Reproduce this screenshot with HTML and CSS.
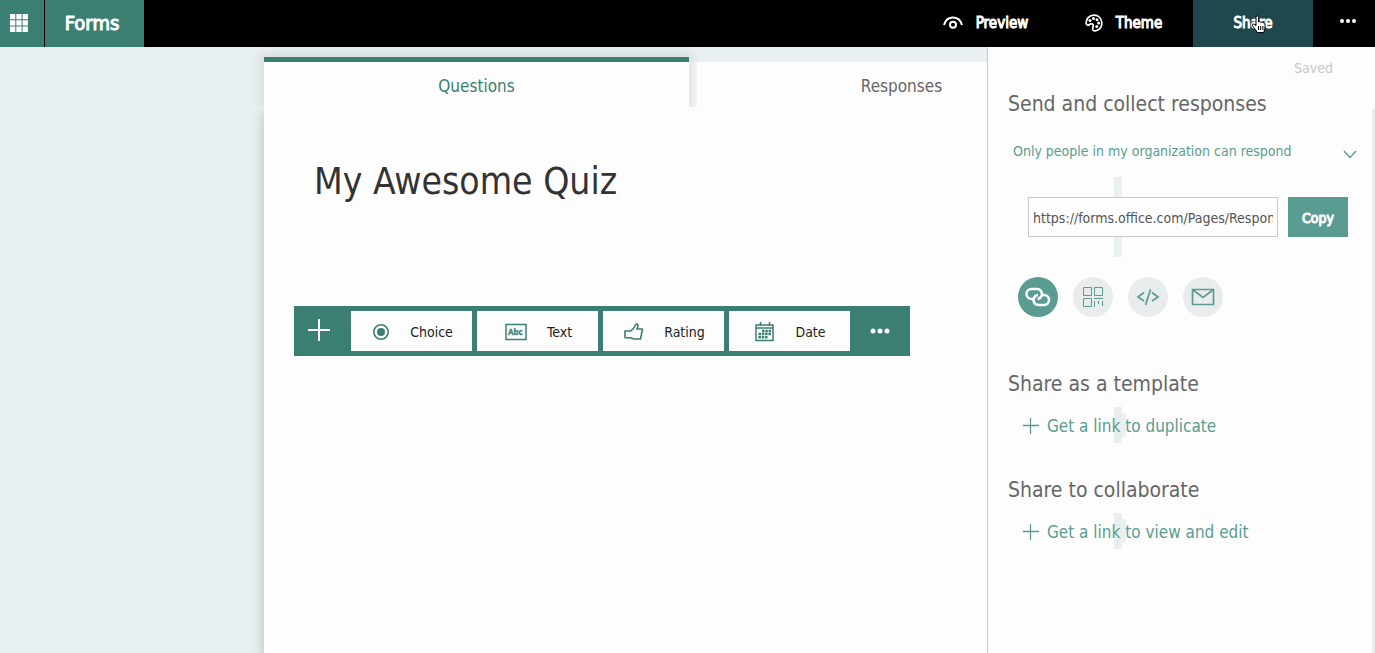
FILE: index.html
```html
<!DOCTYPE html>
<html lang="en">
<head>
<meta charset="utf-8">
<title>Forms</title>
<meta name="viewport" content="width=device-width, initial-scale=1">
<link rel="stylesheet" href="styles.css">
</head>
<body>
<div class="app">
  <header class="topbar">
    <button class="launcher" aria-label="App launcher">
      <svg width="18" height="18" viewBox="0 0 18 18" fill="#fff"><path d="M0 0h5.300v5.300H0zM6.300 0h5.300v5.300h-5.300zM12.600 0h5.300v5.300h-5.300zM0 6.300h5.300v5.300H0zM6.300 6.300h5.300v5.300h-5.300zM12.600 6.300h5.300v5.300h-5.300zM0 12.600h5.300v5.300H0zM6.300 12.600h5.300v5.300h-5.300zM12.600 12.600h5.300v5.300h-5.300z"/></svg>
    </button>
    <a class="brand" href="#">Forms</a>
    <nav class="actions">
      <button class="action preview">
        <svg width="20" height="14" viewBox="0 0 20 14" fill="none" stroke="#fff" stroke-width="2"><path d="M1 9C2.500 3.500 5.500 1.500 10 1.500S17.500 3.500 19 9"/><circle cx="10" cy="8.700" r="3"/></svg>
        Preview
      </button>
      <button class="action theme">
        <svg width="18" height="18" viewBox="0 0 18 18" fill="none" stroke="#fff" stroke-width="1.700"><path d="M9 1.200C4 1.200 1 5 1.200 9.500c.2 2 2 2 3.300 1C6 9.300 8.500 9.500 8.300 11.800 8.200 13.500 7 14 7.800 15.800c.8 1.500 3.500 1.200 5.500 0 2.500-1.500 3.700-4 3.500-7C16.500 4.500 13.500 1.200 9 1.200z"/><g fill="#fff" stroke="none"><circle cx="5" cy="6.500" r="1.500"/><circle cx="8.500" cy="4.500" r="1.500"/><circle cx="12" cy="5.800" r="1.500"/><circle cx="13.600" cy="9" r="1.500"/><circle cx="11.800" cy="12.500" r="1.500"/></g></svg>
        Theme
      </button>
      <button class="action share">Share
        <svg class="cursor" width="16" height="19" viewBox="0 0 16 19"><path d="M5 10.500V2.200C5 .5 7.500.5 7.500 2.200V7c.6-.9 2-.7 2.200.4.7-.8 2-.5 2.200.6.800-.6 2.100-.2 2.100 1V13c0 1.500-1 2.500-1.200 4.500H6.200C5.500 15.500 2.500 12.500 1.500 10.800c-.8-1.500.8-2.300 1.900-1.300z" fill="#fff" stroke="#000" stroke-width="1"/><path d="M7.500 11v4M9.700 11v4M11.900 11v4" stroke="#000"/></svg>
      </button>
      <button class="more" aria-label="More options"><svg width="16" height="4" viewBox="0 0 16 4" fill="#fff"><circle cx="2" cy="2" r="2"/><circle cx="8" cy="2" r="2"/><circle cx="14" cy="2" r="2"/></svg></button>
    </nav>
  </header>

  <main class="workspace">
    <div class="form">
      <div class="tabs">
        <button class="tab tab-active">Questions</button>
        <button class="tab">Responses</button>
      </div>
      <section class="sheet">
        <h1 class="title">My Awesome Quiz</h1>
        <div class="toolbar">
          <button class="add" aria-label="Add question"><svg width="22" height="22" viewBox="0 0 22 22" stroke="#fff" stroke-width="2"><path d="M11 0v22M0 11h22"/></svg></button>
          <button class="kind">
            <svg width="18" height="18" viewBox="0 0 18 18"><circle cx="9" cy="9" r="7.200" fill="none" stroke="#3b7f72" stroke-width="1.600"/><circle cx="9" cy="9" r="4" fill="#3b7f72"/></svg>
            Choice
          </button>
          <button class="kind">
            <svg width="22" height="18" viewBox="0 0 22 18"><path d="M1 1.500h20v15H1z" fill="none" stroke="#3b7f72" stroke-width="1.500"/><text class="abc" x="3" y="12">Abc</text></svg>
            Text
          </button>
          <button class="kind">
            <svg width="20" height="18" viewBox="0 0 20 18" fill="none" stroke="#3b7f72" stroke-width="1.600" stroke-linejoin="round"><path d="M1 8h5.500C9 6.500 10.500 4.500 11.500 2c.4-1.200 2.500-1.300 2.500.5 0 1.500-.6 2.500-1 3.500h5.500L16.500 16H9.500L7 14.700H1z"/></svg>
            Rating
          </button>
          <button class="kind">
            <svg width="20" height="20" viewBox="0 0 20 20"><path d="M1 3h17v15.500H1zM1 6h17M5.500 0v4M14.500 0v4" fill="none" stroke="#3b7f72" stroke-width="1.500"/><path d="M7 9h9M3.500 12H16M3.500 15.300h9" fill="none" stroke="#3b7f72" stroke-width="2.600" stroke-dasharray="2.500 .8"/></svg>
            Date
          </button>
          <button class="add-more" aria-label="More question types"><svg width="20" height="6" viewBox="0 0 20 6" fill="#fff"><circle cx="3" cy="3" r="2.500"/><circle cx="10" cy="3" r="2.500"/><circle cx="17" cy="3" r="2.500"/></svg></button>
        </div>
      </section>
    </div>

    <aside class="panel">
      <p class="saved">Saved</p>
      <h2 class="heading">Send and collect responses</h2>
      <div class="audience">
        <select class="audience-select" aria-label="Who can respond"><option>Only people in my organization can respond</option></select>
        <svg class="chevron" width="14" height="9" viewBox="0 0 14 9" fill="none" stroke="#5b9c92" stroke-width="1.400"><path d="M1 1l6 6.500L13 1"/></svg>
      </div>
      <div class="linkrow">
        <input class="url" type="text" aria-label="Form link" value="https://forms.office.com/Pages/ResponsePage.aspx">
        <button class="copy">Copy</button>
      </div>
      <div class="channels">
        <button class="channel channel-active" aria-label="Link"><svg width="26" height="20" viewBox="0 0 26 20" fill="none" stroke="#fff" stroke-width="2.500"><path d="M9 12H6.500a5 5 0 0 1 0-10h5.500a5 5 0 0 1 3.500 8.500c-.8.800-1.800 1.300-3 1.400"/><path d="M16.500 8H19a5 5 0 0 1 0 10h-5.500a5 5 0 0 1-3.500-8.500c.8-.8 1.800-1.300 3-1.400"/></svg></button>
        <button class="channel" aria-label="QR code"><svg width="22" height="22" viewBox="0 0 22 22" fill="none" stroke="#5b9c92"><path d="M1.500 1.500h8v8h-8zM12.500 1.500h8v8h-8zM1.500 12.500h8v8h-8zM12 12.500h9M12.500 15v6M16.500 15v3M20.500 15v5"/></svg></button>
        <button class="channel" aria-label="Embed"><svg width="24" height="18" viewBox="0 0 24 18" fill="none" stroke="#5b9c92" stroke-width="1.700"><path d="M8 4.500L2 9l6 4M16 4.500L22 9l-6 4M14.500 1.500l-5 15.500"/></svg></button>
        <button class="channel" aria-label="Email"><svg width="24" height="18" viewBox="0 0 24 18" fill="none" stroke="#5b9c92" stroke-width="1.700"><path d="M1.500 1.500h21v15h-21zM1.500 1.500L12 9.500l10.500-8"/></svg></button>
      </div>
      <h2 class="heading">Share as a template</h2>
      <a class="getlink" href="#"><svg width="16" height="16" viewBox="0 0 16 16" stroke="#5b9c92" stroke-width="1.300"><path d="M7.500 0v16M0 7.500h16"/></svg>Get a link to duplicate</a>
      <h2 class="heading">Share to collaborate</h2>
      <a class="getlink" href="#"><svg width="16" height="16" viewBox="0 0 16 16" stroke="#5b9c92" stroke-width="1.300"><path d="M7.500 0v16M0 7.500h16"/></svg>Get a link to view and edit</a>
    </aside>
  </main>
</div>
</body>
</html>
```

FILE: styles.css
```css
* { box-sizing: border-box; }
body, button, input, select {
  font-family: "DejaVu Sans Condensed", "Noto Sans", sans-serif;
  font-size: 14px;
}
body { margin: 0; color: #333; background: #e8f0f2; }
button { border: 0; padding: 0; background: none; color: inherit; display: flex; align-items: center; justify-content: center; cursor: pointer; }
h1, h2, p { margin: 0; font-weight: normal; }
a { text-decoration: none; }
svg { flex: none; }

.app { min-height: 100vh; display: flex; flex-direction: column; }

.topbar { height: 47px; display: flex; background: #000; color: #fff; }
.launcher { width: 44px; padding-right: 6px; padding-bottom: 2px; margin-right: 1px; background: #3b7f72; }
.brand { width: 99px; padding-right: 5px; padding-bottom: 2px; display: flex; align-items: center; justify-content: center; background: #3b7f72; color: #fff; font-size: 20px; -webkit-text-stroke: 1px #fff; }
.actions { margin-left: auto; display: flex; }
.action { font-size: 15px; -webkit-text-stroke: 1px #fff; padding-bottom: 2px; gap: 13px; }
.preview { width: 141px; padding-right: 2px; }
.theme { width: 139px; margin-left: -3px; }
.share { position: relative; width: 120px; background: #1e484d; }
.cursor { position: absolute; left: 58px; top: 15px; }
.more { width: 62px; padding-left: 7px; padding-bottom: 5px; }

.workspace { position: relative; flex: 1; display: flex; justify-content: center; padding: 10px 0 0 3px; overflow: hidden; }
.form { width: 850px; display: flex; flex-direction: column; }
.tabs { display: flex; height: 50px; }
.tab { flex: 1; margin-top: 5px; padding-top: 2px; background: #fdfdfd; color: #666; font-size: 17px; }
.tab-active { position: relative; margin-top: 0; border-top: 5px solid #3b7f72; color: #3b7f72; box-shadow: 0 0 10px 4px #d8dddd; clip-path: inset(-10px -8px 0 -13px); }
.sheet { flex: 1; padding: 50px 30px; background: #fdfdfd; box-shadow: 0 8px 10px 3px #c8cecf; clip-path: inset(0 0 0 -13px); }
.title { padding-left: 20px; font-size: 37px; line-height: 50px; color: #333; }
.toolbar { width: 616px; max-width: 100%; height: 50px; margin-top: 99px; padding: 5px 0; display: flex; gap: 5px; background: #3b7f72; }
.add { width: 52px; padding-right: 2px; padding-bottom: 2px; }
.kind { flex: 1; padding-left: 2px; padding-top: 1px; gap: 20px; background: #fdfdfd; color: #222; }
.abc { font: bold 8px "Noto Sans", sans-serif; fill: #3b7f72; stroke: #3b7f72; stroke-width: .3; }
.add-more { width: 55px; padding-right: 5px; }

.panel { position: absolute; top: 0; right: 0; bottom: 0; width: 388px; padding: 11px 27px 0 20px; border-left: 1px solid #c8c8c8; background: linear-gradient(#e8eeef, #e8eeef) right 62px / 3px 100% no-repeat #fdfdfd; }
.saved { margin-right: 15px; text-align: right; line-height: 20px; color: #c8c8c8; }
.heading { margin-top: 11px; font-size: 21px; line-height: 30px; color: #666; }
.audience { position: relative; margin: 17px -9px 0 5px; height: 30px; }
.audience-select { width: 100%; height: 30px; padding: 0; border: 0; appearance: none; background: transparent; color: #5b9c92; }
.chevron { position: absolute; right: 0; top: 14px; pointer-events: none; }
.linkrow { margin-left: 20px; margin-top: 11px; padding: 20px 0; display: flex; gap: 10px; background: linear-gradient(#e8f0f2, #e8f0f2) 86px 0 / 8px 100% no-repeat; }
.url { flex: 1; min-width: 0; height: 40px; padding: 2px 4px 0; border: 1px solid #c8c8c8; border-radius: 0; background: #fdfdfd; color: #555; text-overflow: clip; }
.copy { width: 60px; padding-top: 1px; background: #5b9c92; color: #fff; -webkit-text-stroke: 1px #fff; }
.channels { margin: 20px 0 52px 10px; display: flex; gap: 15px; }
.channel { width: 40px; height: 40px; border-radius: 50%; background: #e8eced; }
.channel-active { background: #5b9c92; }
.getlink { height: 36px; margin-top: 8px; margin-bottom: 32px; padding-left: 15px; padding-top: 2px; display: flex; align-items: center; gap: 8px; font-size: 17px; color: #5b9c92; background: linear-gradient(#e8eeef, #e8eeef) 106px 0 / 8px 36px no-repeat, linear-gradient(#e8f0f2, #e8f0f2) 114px 6px / 4px 24px no-repeat; }
```
